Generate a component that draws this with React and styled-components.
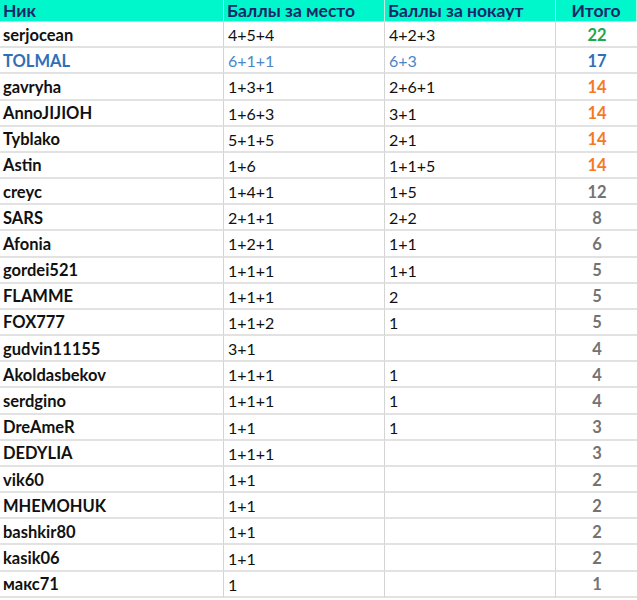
import React from 'react';
import styled, { createGlobalStyle } from 'styled-components';

const rows = [
  ['serjocean', '4+5+4', '4+2+3', 22, 'green'],
  ['TOLMAL', '6+1+1', '6+3', 17, 'blue'],
  ['gavryha', '1+3+1', '2+6+1', 14, 'orange'],
  ['AnnoJIJIOH', '1+6+3', '3+1', 14, 'orange'],
  ['Tyblako', '5+1+5', '2+1', 14, 'orange'],
  ['Astin', '1+6', '1+1+5', 14, 'orange'],
  ['creyc', '1+4+1', '1+5', 12],
  ['SARS', '2+1+1', '2+2', 8],
  ['Afonia', '1+2+1', '1+1', 6],
  ['gordei521', '1+1+1', '1+1', 5],
  ['FLAMME', '1+1+1', '2', 5],
  ['FOX777', '1+1+2', '1', 5],
  ['gudvin11155', '3+1', '', 4],
  ['Akoldasbekov', '1+1+1', '1', 4],
  ['serdgino', '1+1+1', '1', 4],
  ['DreAmeR', '1+1', '1', 3],
  ['DEDYLIA', '1+1+1', '', 3],
  ['vik60', '1+1', '', 2],
  ['MHEMOHUK', '1+1', '', 2],
  ['bashkir80', '1+1', '', 2],
  ['kasik06', '1+1', '', 2],
  ['макс71', '1', '', 1],
];

const totalColors = {
  green: '#1ea84b',
  blue: '#2f6fb8',
  orange: '#f47a22',
};

const GlobalStyle = createGlobalStyle`
  html, body {
    margin: 0;
    padding: 0;
    background: #ffffff;
  }
  body {
    font-family: Lato, "Noto Sans", "Liberation Sans", sans-serif;
  }
`;

const Sheet = styled.div`
  width: 637px;
  display: grid;
  grid-template-columns: 224px 161px 171px 81px;
  grid-template-rows: 22px;
  grid-auto-rows: 26.18px;
  font-size: 16px;
`;

const HeadCell = styled.div`
  background: #00f7cb;
  color: #17276a;
  font-size: 17.5px;
  font-weight: 700;
  display: flex;
  align-items: center;
  justify-content: ${({ $center }) => ($center ? 'center' : 'flex-start')};
  padding: 0 3px;
  border-right: 1px solid #bfe9dc;
  border-bottom: 1px solid #d6d6d6;
  box-sizing: border-box;
  white-space: nowrap;
  &:last-child {
    border-right: none;
  }
`;

const Cell = styled.div`
  display: flex;
  align-items: center;
  justify-content: ${({ $center }) => ($center ? 'center' : 'flex-start')};
  padding: 1px 3px 0 ${({ $first }) => ($first ? '3px' : '4px')};
  border-right: ${({ $last }) => ($last ? 'none' : '1px solid #d4d4d4')};
  border-bottom: 2px solid #e2e2e2;
  box-sizing: border-box;
  color: ${({ $color }) => $color || '#111111'};
  font-size: ${({ $bold }) => ($bold ? '16.5px' : '16px')};
  font-weight: ${({ $bold }) => ($bold ? 700 : 400)};
  white-space: nowrap;
  overflow: hidden;
`;

const App = () => (
  <>
    <GlobalStyle />
    <Sheet>
      <HeadCell>Ник</HeadCell>
      <HeadCell>Баллы за место</HeadCell>
      <HeadCell>Баллы за нокаут</HeadCell>
      <HeadCell $center>Итого</HeadCell>
      {rows.map(([nick, place, knock, total, tone]) => {
        const blue = tone === 'blue';
        return (
          <React.Fragment key={nick}>
            <Cell $first $bold $color={blue ? '#2f6fb8' : '#111111'}>{nick}</Cell>
            <Cell $color={blue ? '#4a86c8' : undefined}>{place}</Cell>
            <Cell $color={blue ? '#4a86c8' : undefined}>{knock}</Cell>
            <Cell $last $center $bold $color={totalColors[tone] || '#737373'}>{total}</Cell>
          </React.Fragment>
        );
      })}
    </Sheet>
  </>
);

export default App;
